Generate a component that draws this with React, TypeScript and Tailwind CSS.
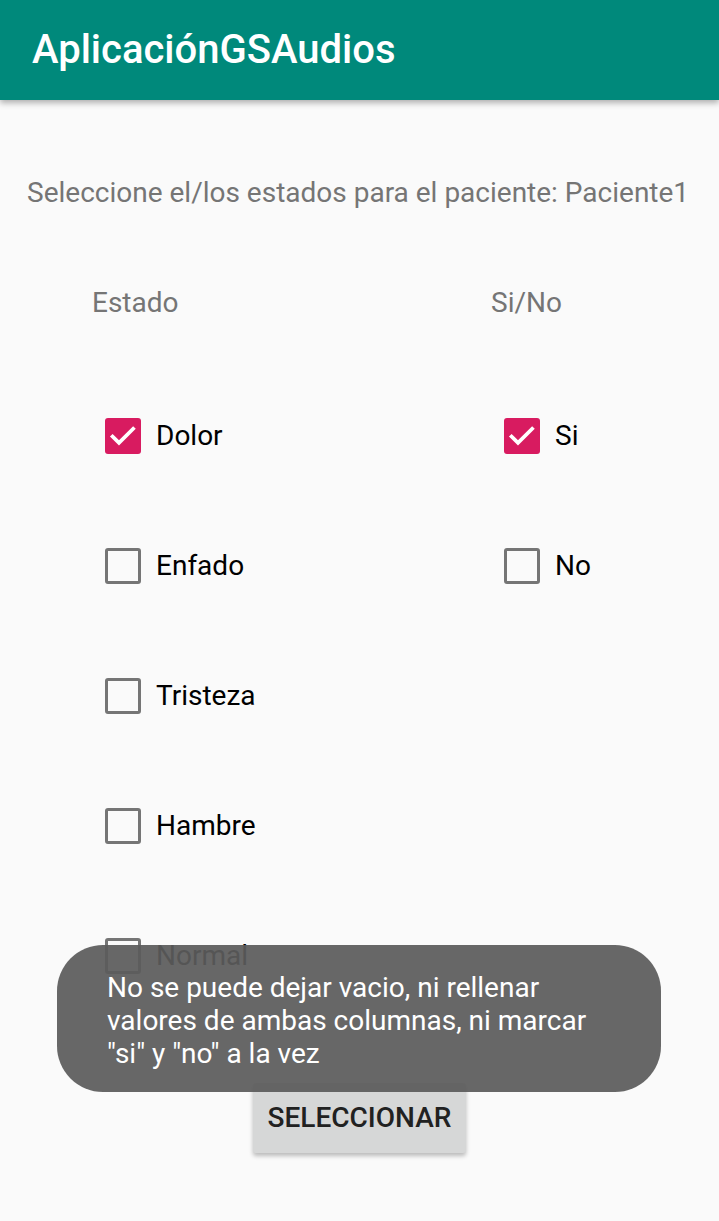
import React from "react";

type Item = { label: string; checked: boolean };

const estados: Item[] = [
  { label: "Dolor", checked: true },
  { label: "Enfado", checked: false },
  { label: "Tristeza", checked: false },
  { label: "Hambre", checked: false },
  { label: "Normal", checked: false },
];

const siNo: Item[] = [
  { label: "Si", checked: true },
  { label: "No", checked: false },
];

const Box = ({ checked }: { checked: boolean }) =>
  checked ? (
    <div className="flex h-[36px] w-[36px] items-center justify-center rounded-[3px] bg-[#d81b60]">
      <svg width="32" height="32" viewBox="0 0 24 24" fill="none">
        <path
          d="M4.2 12.4l4.8 4.8 10.6-10.6"
          stroke="#ffffff"
          strokeWidth="2.8"
          strokeLinecap="square"
        />
      </svg>
    </div>
  ) : (
    <div className="h-[36px] w-[36px] rounded-[3px] border-[3px] border-[#757575]" />
  );

const Check = ({ item }: { item: Item }) => (
  <div className="flex h-[130px] items-center gap-[15px] pl-[13px]">
    <Box checked={item.checked} />
    <span className="text-[28px] leading-[32px] text-black">{item.label}</span>
  </div>
);

export default function App() {
  return (
    <div
      className="relative min-h-[1221px] w-[719px] bg-[#fafafa]"
      style={{ fontFamily: "Roboto, 'Noto Sans', sans-serif" }}
    >
      <header className="relative z-10 flex h-[100px] items-center bg-[#00897b] pl-[32px] shadow-[0_3px_6px_rgba(0,0,0,0.3)]">
        <h1 className="text-[40px] font-medium leading-none text-white">
          AplicaciónGSAudios
        </h1>
      </header>

      <p className="mt-[78px] pl-[27px] text-[28px] leading-[30px] text-[#757575]">
        Seleccione el/los estados para el paciente: Paciente1
      </p>

      <div className="mt-[80px] grid grid-cols-[399px_1fr] pl-[92px]">
        <span className="text-[28px] leading-[30px] text-[#757575]">Estado</span>
        <span className="text-[28px] leading-[30px] text-[#757575]">Si/No</span>
        <div className="mt-[53px] flex flex-col">
          {estados.map((e) => (
            <Check key={e.label} item={e} />
          ))}
        </div>
        <div className="mt-[53px] flex flex-col">
          {siNo.map((e) => (
            <Check key={e.label} item={e} />
          ))}
        </div>
      </div>

      <div className="mt-[62px] flex justify-center">
        <button className="h-[70px] w-[213px] rounded-[3px] bg-[#d6d7d7] text-[28px] font-medium text-[#212121] shadow-[0_3px_4px_rgba(0,0,0,0.25)]">
          SELECCIONAR
        </button>
      </div>

      <div className="absolute left-[57px] top-[945px] h-[147px] w-[604px] rounded-[46px] bg-[rgba(91,91,91,0.93)] pl-[50px] pt-[26px]">
        <p className="text-[28px] leading-[33px] text-white">
          No se puede dejar vacio, ni rellenar
          <br />
          valores de ambas columnas, ni marcar
          <br />
          "si" y "no" a la vez
        </p>
      </div>
    </div>
  );
}
